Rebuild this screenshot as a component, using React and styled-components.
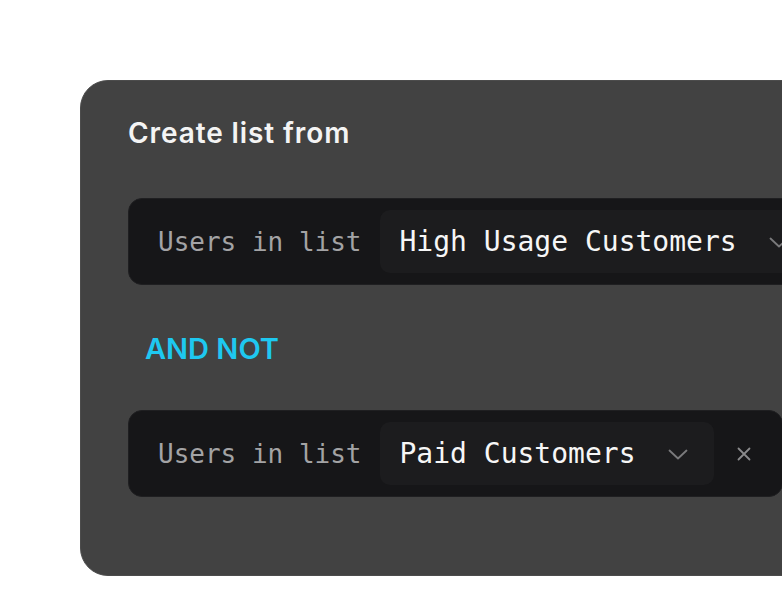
import React from "react";
import styled, { createGlobalStyle } from "styled-components";

const GlobalStyle = createGlobalStyle`
  html, body {
    margin: 0;
    padding: 0;
    background: #ffffff;
    overflow: hidden;
  }
`;

const rows = [
  { id: 1, list: "High Usage Customers", removable: false },
  { id: 2, list: "Paid Customers", removable: true },
];

const Chevron = () => (
  <svg width="20" height="11" viewBox="0 0 20 11" fill="none">
    <polyline
      points="1.5,1.5 10,9.5 18.5,1.5"
      stroke="#7a7a7c"
      strokeWidth="1.8"
      strokeLinecap="round"
      strokeLinejoin="round"
    />
  </svg>
);

const Close = () => (
  <svg width="14" height="14" viewBox="0 0 14 14" fill="none">
    <path
      d="M1.5 1.5 L12.5 12.5 M12.5 1.5 L1.5 12.5"
      stroke="#8a8a8c"
      strokeWidth="1.8"
      strokeLinecap="round"
    />
  </svg>
);

const FilterRow = ({ list, removable }) => (
  <Row>
    <Label>Users in list</Label>
    <Select>
      <span>{list}</span>
      <Chevron />
    </Select>
    {removable && (
      <Remove>
        <Close />
      </Remove>
    )}
  </Row>
);

const App = () => {
  return (
    <>
      <GlobalStyle />
      <Page>
        <Card>
          <Title>Create list from</Title>
          <FilterRow {...rows[0]} />
          <Operator>AND NOT</Operator>
          <FilterRow {...rows[1]} />
        </Card>
      </Page>
    </>
  );
};

export default App;

const Page = styled.div`
  width: 782px;
  height: 592px;
  padding: 80px 0 0 80px;
  box-sizing: border-box;
  overflow: hidden;
`;

const Card = styled.section`
  width: 820px;
  height: 496px;
  box-sizing: border-box;
  background: #424242;
  border: 1px solid #4c4c4c;
  border-radius: 28px;
  padding: 35px 0 0 47px;
  display: flex;
  flex-direction: column;
  align-items: flex-start;
`;

const Title = styled.h2`
  margin: 0 0 48px;
  font-family: Inter, "Noto Sans", sans-serif;
  font-weight: 600;
  font-size: 28px;
  line-height: 34px;
  color: #f4f4f4;
  letter-spacing: 0.9px;
`;

const Row = styled.div`
  display: inline-flex;
  align-items: center;
  flex-shrink: 0;
  height: 87px;
  box-sizing: border-box;
  padding: 0 0 0 29px;
  background: #161618;
  border: 1px solid #1f1f21;
  border-radius: 14px;
  font-family: "DejaVu Sans Mono", "Liberation Mono", monospace;
  white-space: nowrap;
`;

const Label = styled.span`
  font-size: 26px;
  color: #a3a3a5;
  margin-right: 18px;
`;

const Select = styled.div`
  display: flex;
  align-items: center;
  gap: 32px;
  height: 63px;
  box-sizing: border-box;
  padding: 0 26px 0 20px;
  margin-right: 11px;
  background: #1c1c1e;
  border-radius: 10px;
  font-size: 28px;
  color: #f6f6f6;

  svg {
    margin-top: 2px;
  }
`;

const Remove = styled.span`
  display: flex;
  align-items: center;
  padding: 0 31px 0 12px;
`;

const Operator = styled.div`
  margin: 46px 0 43px 17px;
  font-family: Inter, "Noto Sans", sans-serif;
  font-weight: 600;
  font-size: 29px;
  line-height: 36px;
  color: #1ec8f0;
`;
